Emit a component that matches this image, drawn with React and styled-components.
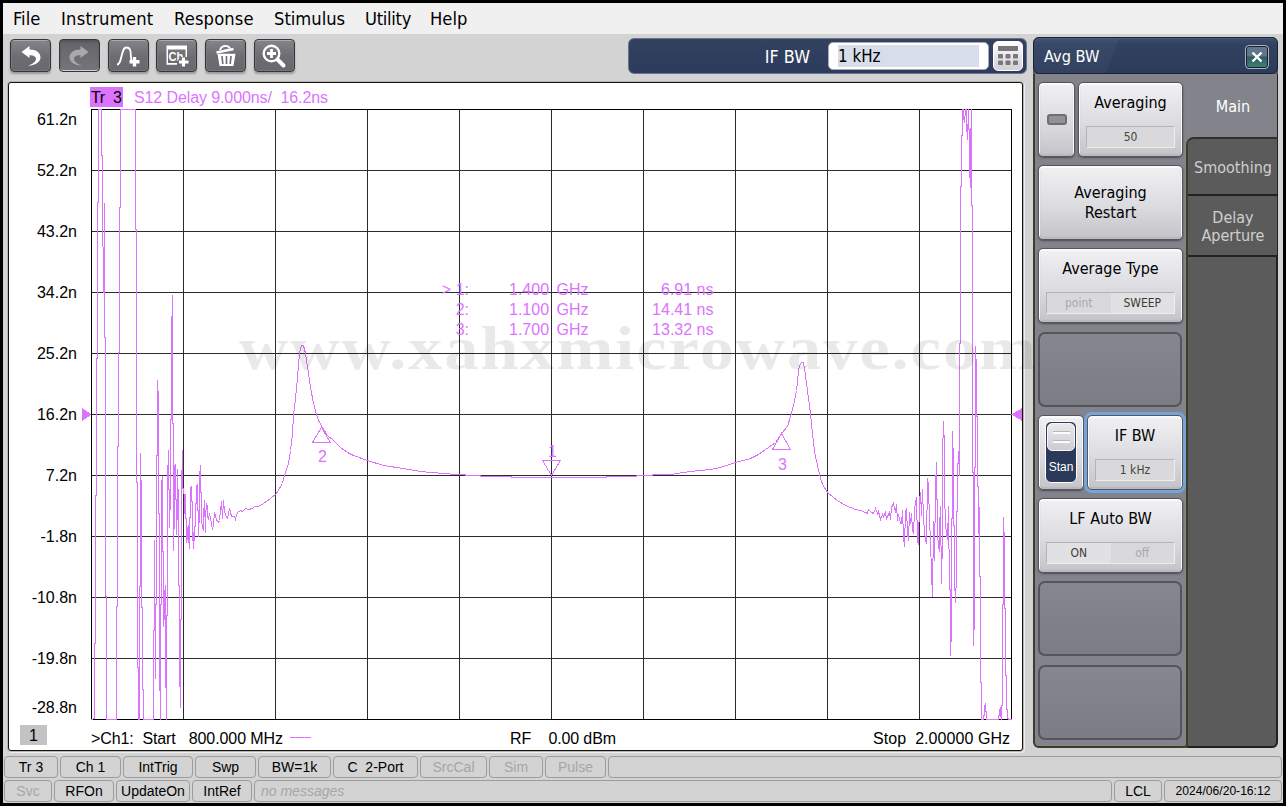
import React from 'react'
import styled, { createGlobalStyle, css } from 'styled-components'

const colors = {
    trace: '#dc73ff',
    window: '#d3d3d3',
    panel: '#83838c',
    tab: '#5b5b5b',
}

const uiFont = '"DejaVu Sans Condensed", "DejaVu Sans", sans-serif'
const plotFont = '"Liberation Sans", Arial, sans-serif'

const GlobalStyle = createGlobalStyle`
    * {
        box-sizing: border-box;
    }
    body {
        margin: 0;
        background: #000;
        font-family: ${uiFont};
    }
`

const Window = styled.div`
    width: 1286px;
    height: 806px;
    border: 3px solid #000;
    background: ${colors.window};
    display: flex;
    flex-direction: column;
    overflow: hidden;
`

const MenuBar = styled.nav`
    height: 31px;
    flex: none;
    background: #f0f0f0;
    display: flex;
    align-items: flex-start;
    padding-left: 10px;
    gap: 20px;
`

const MenuItem = styled.span`
    width: ${({ $width }) => $width}px;
    font-size: 18.2px;
    letter-spacing: ${({ $spacing }) => $spacing || 0}px;
    line-height: 31px;
    white-space: nowrap;
    color: #000;
`

const Workspace = styled.div`
    height: 719px;
    flex: none;
    display: flex;
`

const MainColumn = styled.div`
    width: 1030px;
    padding-left: 5px;
`

const Toolbar = styled.div`
    height: 48px;
    display: flex;
    align-items: flex-start;
    justify-content: space-between;
    padding: 4px 6px 0 2px;
`

const ToolGroup = styled.div`
    display: flex;
    gap: 7.8px;
    padding-top: 1px;
`

const ToolButton = styled.button`
    width: 41px;
    height: 33px;
    padding: 0;
    border: 1px solid #36363a;
    border-radius: 4px;
    background: linear-gradient(#858589, #6c6c71 55%, #68686d);
    box-shadow: inset 0 1px 0 #a9a9ad, inset 0 0 0 1px #77777c, 0 2px 2px #999;
    display: flex;
    align-items: center;
    justify-content: center;

    ${({ $pressed }) => $pressed && css`
        background: linear-gradient(#646468, #75757a);
        box-shadow: inset 0 2px 2px #55555a, inset 0 -1px 0 #d0d0d2;
    `}
`

const EntryBar = styled.div`
    width: 399px;
    height: 36px;
    border-radius: 6px;
    border: 1px solid #69748c;
    background: linear-gradient(#32425f, #2d3b5d);
    display: flex;
    align-items: center;
    justify-content: flex-end;
    padding-right: 3px;
`

const EntryLabel = styled.span`
    color: #fff;
    font-size: 17.8px;
    margin-right: 18px;
    padding-top: 1px;
`

const EntryField = styled.div`
    width: 161px;
    height: 28px;
    border-radius: 5px;
    border: 1px solid #a5abb7;
    background: #fff;
    padding: 2px 9px 3px;
    margin-top: -1px;
`

const EntryValue = styled.div`
    height: 22px;
    line-height: 22px;
    background: #d7dde9;
    font-size: 16.8px;
`

const KeypadButton = styled.button`
    width: 30px;
    height: 30px;
    margin-left: 4px;
    padding: 0;
    border: 1px solid #fff;
    border-radius: 5px;
    background: linear-gradient(#fff, #cfcfd4);
    display: flex;
    align-items: center;
    justify-content: center;
`

const Display = styled.div`
    position: relative;
    width: 1015px;
    height: 669px;
    border: 1px solid #14140a;
    border-radius: 3px;
    background: #fff;
    box-shadow: 0 0 0 1px #b6b6b0, 1px 1px 0 1px #eee;
`

const Plot = styled.svg`
    display: block;
    font-family: ${plotFont};
    font-size: 16px;

    text {
        white-space: pre;
    }
`

const Watermark = styled.div`
    position: absolute;
    left: 230px;
    top: 231px;
    font-family: "Liberation Serif", serif;
    font-weight: bold;
    font-size: 61px;
    line-height: 70px;
    letter-spacing: 1.75px;
    transform: scaleX(1.12);
    transform-origin: left;
    white-space: nowrap;
    color: rgba(0, 0, 0, 0.085);
`

const SidePanel = styled.aside`
    position: relative;
    width: 245px;
    height: 711px;
    margin-top: 3px;
    border-radius: 6px;
    background: ${colors.tab};
    display: flex;
    flex-direction: column;
`

const PanelTitle = styled.header`
    height: 37px;
    flex: none;
    border: 1px solid #1b2230;
    border-radius: 6px;
    background:
        linear-gradient(110deg, rgba(255, 255, 255, 0.035) 33%, transparent 33.4%),
        linear-gradient(#3b4c6e, #31415f 20%, #2d3b5b);
    box-shadow: inset 0 1px 0 #4b5c80;
    display: flex;
    align-items: center;
    justify-content: space-between;
    padding: 2px 8px 0 10px;
    color: #fff;
    font-size: 16.2px;
`

const CloseButton = styled.button`
    width: 24px;
    height: 24px;
    padding: 0;
    border: 1px solid #a9b3c4;
    border-radius: 4px;
    background: linear-gradient(#5f7788 45%, #2f5b5e 50%, #3f8377);
    box-shadow: inset 0 0 0 1px #17202c;
    display: flex;
    align-items: center;
    justify-content: center;
`

const PanelBody = styled.div`
    flex: 1;
    display: flex;
    border-radius: 0 0 6px 6px;
    overflow: hidden;
`

const KeyColumn = styled.div`
    width: 154px;
    border-left: 2px solid #3c3e28;
    border-right: 1px solid #3c3e28;
    border-bottom: 2px solid #3c3e28;
    border-radius: 0 0 4px 6px;
    background: ${colors.panel};
    display: flex;
    flex-direction: column;
    gap: 8.25px;
    padding: 7.8px 3px 0;
`

const KeyRow = styled.div`
    display: flex;
    gap: 3px;
    height: 75px;
    flex: none;
`

const raised = css`
    border: 1px solid #55555b;
    border-radius: 5px;
    background: linear-gradient(#f1f1f4, #dcdce0 55%, #c3c3c8);
    box-shadow: inset 0 1px 0 1px #fafafc, inset 0 -1px 1px 1px #b9b9be, 0 1px 2px #4d4d55;
`

const SoftKey = styled.button`
    ${raised}
    flex: 1;
    min-width: 0;
    height: 75px;
    font-family: inherit;
    font-size: 16px;
    line-height: 20px;
    color: #000;
    display: flex;
    flex-direction: column;
    align-items: center;
    justify-content: ${({ $centered }) => ($centered ? 'center' : 'space-between')};
    padding: ${({ $centered }) => ($centered ? '0 30px' : '10px 7px 8px 7px')};

    ${({ $active }) => $active && css`
        outline: 3px solid #73a4da;
        outline-offset: -0.5px;
    `}
`

const EmptyKey = styled.div`
    width: 144px;
    height: 75px;
    flex: none;
    border: 2px solid #54545c;
    border-radius: 7px;
    background: linear-gradient(#86868f, #7c7c85);
`

const ValueBox = styled.span`
    width: 100%;
    height: 22px;
    border: 1px solid #b4b4b8;
    border-right-color: #eee;
    border-bottom-color: #eee;
    background: #d9d9dc;
    font-size: 12px;
    line-height: 20px;
    text-align: center;
    color: #45453c;
    display: flex;
`

const Value = styled.span`
    flex: 1;
`

const ValueOption = styled(Value)`
    color: ${({ $on }) => ($on ? '#3c3c34' : '#a8a8ab')};
    background: ${({ $on }) => ($on ? '#e1e1e4' : 'transparent')};
`

const LampKey = styled.button`
    ${raised}
    width: 37px;
    height: 75px;
    padding: 0;
    display: flex;
    align-items: center;
    justify-content: center;
`

const Lamp = styled.span`
    width: 20px;
    height: 11px;
    border: 2px solid #6e6e72;
    border-radius: 3px;
    background: #929296;
`

const SwitchKey = styled.button`
    ${raised}
    width: 46px;
    height: 75px;
    padding: 0;
    display: flex;
    align-items: center;
    justify-content: center;
`

const SwitchTrack = styled.span`
    width: 32px;
    height: 62px;
    border: 1px solid #fff;
    border-radius: 6px;
    background: #2c3a59;
    color: #fff;
    font-size: 12px;
    display: flex;
    flex-direction: column;
    align-items: center;
    padding-top: 1px;
    gap: 9px;
`

const SwitchKnob = styled.span`
    width: 28px;
    height: 28px;
    flex: none;
    border: 1px solid #f8f8f8;
    border-radius: 5px;
    background: linear-gradient(#e9e9ec, #cdcdd1);
    display: flex;
    flex-direction: column;
    align-items: center;
    justify-content: center;
    gap: 6px;
`

const KnobGrip = styled.span`
    width: 17px;
    height: 3px;
    border-top: 1px solid #b8b8bc;
    background: #fafafa;
`

const TabColumn = styled.div`
    flex: 1;
    margin-left: -1px;
    background: ${colors.panel};
    display: flex;
    flex-direction: column;
`

const Tab = styled.div`
    height: ${({ $height }) => $height}px;
    flex: none;
    font-size: 16px;
    line-height: 18px;
    text-align: center;
    padding: ${({ $active }) => ($active ? '2px 0 0 3px' : '2px 0 0 1px')};
    color: ${({ $active }) => ($active ? '#fff' : '#cfcfcf')};
    background: ${({ $active }) => ($active ? 'transparent' : colors.tab)};
    border-bottom: ${({ $active }) => ($active ? '0' : '2px solid #222')};
    border-right: 1px solid #222;
    border-top-left-radius: ${({ $first }) => ($first ? 6 : 0)}px;
    display: flex;
    align-items: center;
    justify-content: center;
`

const TabStack = styled.div`
    flex: 1;
    border-top: 2px solid #2f3122;
    border-left: 2px solid #3c3e28;
    border-top-left-radius: 8px;
    background: ${colors.tab};
    display: flex;
    flex-direction: column;
`

const TabFill = styled.div`
    flex: 1;
    border-right: 2px solid #222;
    border-bottom: 2px solid #222;
    border-bottom-right-radius: 6px;
`

const StatusArea = styled.footer`
    display: flex;
    flex-direction: column;
    gap: 2px;
    padding: 3px 1px 0;
`

const StatusRow = styled.div`
    display: flex;
    gap: 2px;
`

const StatusCell = styled.div`
    width: ${({ $width }) => ($width ? `${$width}px` : 'auto')};
    flex: ${({ $width }) => ($width ? 'none' : '1')};
    height: 22px;
    border: 1px solid #9c9c9c;
    border-radius: 4px;
    font-family: ${plotFont};
    font-size: ${({ $small }) => ($small ? 12.1 : 14)}px;
    font-style: ${({ $message }) => ($message ? 'italic' : 'normal')};
    line-height: 20px;
    text-align: ${({ $message }) => ($message ? 'left' : 'center')};
    padding-left: ${({ $message }) => ($message ? 6 : 0)}px;
    white-space: pre;
    color: ${({ $dim }) => ($dim ? '#a6a6a6' : '#000')};
`

const verticals = [183, 275, 367, 459, 551, 643, 735, 827, 919]
const horizontals = [170, 231, 292, 353, 414, 475, 536, 597, 658]

const scaleLabels = [
    ['61.2n', 119], ['52.2n', 170], ['43.2n', 231], ['34.2n', 292],
    ['25.2n', 353], ['16.2n', 414], ['7.2n', 475], ['-1.8n', 536],
    ['-10.8n', 597], ['-19.8n', 658], ['-28.8n', 707],
]

const markerRows = [
    { name: '> 1:', freq: '1.400', value: '6.91 ns', y: 295 },
    { name: '2:', freq: '1.100', value: '14.41 ns', y: 315 },
    { name: '3:', freq: '1.700', value: '13.32 ns', y: 335 },
]

// x,y pairs of the group delay trace, clipped to the plot area
const lowBand = `91,719 94,718 94,643 95,643 95,495 96,495 96,358 97,358 97,202 98,202 98,109
101,109 101,155 102,155 102,246 103,247 103,292 104,292 104,202 104,337 105,337 105,596 106,596 106,719
116,719 116,606 117,606 117,446 118,446 118,352 119,352 119,207 120,207 120,109
135,109 135,229 136,229 136,482 137,482 137,667 138,667 138,719 139,719 139,586 140,586 140,453
141,505 141,607 142,607 142,689 143,689 143,719 153,719 153,630 154,630 154,540
155,678 155,604 156,604 156,455 157,455 157,380 158,401 158,513 159,513 159,661 160,719 160,604
161,604 161,483 162,476 162,551 163,551 163,626 164,614 164,595 165,585 165,653 166,719 166,615
167,615 167,480 168,450 168,489 169,489 169,527 170,493 170,419 171,419 171,337 172,295 172,423
173,423 173,550 174,508 174,466 175,464 175,499 176,499 176,534 177,506 177,469 178,507 178,585
179,585 179,666 180,707 180,619 181,619 181,491 182,450 182,488 183,488 184,498 184,513 185,494 185,518
186,518 186,542 187,537 187,529 188,525 188,537 189,548 189,517 190,517 190,487 191,486 191,501
192,501 192,532 193,548 193,532 194,540 194,526 195,526 195,503 196,503 196,486 197,484 197,510
198,510 198,536 199,510 199,476 200,465 200,492 201,492 201,520 202,527 203,530 203,515 204,500
205,532 205,516 206,503 207,507 207,515 208,519 209,513 210,517 211,524 212,529 213,524 214,512
215,516 216,519 217,521 218,522 219,520 220,510 221,501 222,518 223,500 224,510 225,515 227,518
228,513 229,508 230,512 231,516 234,516 235,519 236,515 237,512 240,510 242,511 245,508 248,509
252,508 254,506`

const midBand = `254,506 258,506 263,503 270,498 276,493 282,483 284,475 288,463 290,450 292,433 293,415
295,398 297,377 299,352 301,345 303,345 305,353 308,373 310,387 313,403 316,414 318,420 322,427 327,435
333,440 340,447 347,452 353,455 367,460 383,465 403,468 420,471 443,473 455,474 465,474 465,475 480,475
480,476 511,476 511,477 606,477 606,476 636,476 636,475 652,475 652,474 670,474 690,471 710,469 720,467
735,462 750,458 758,454 768,447 775,442 781,433 787,426 790,416 793,405 796,390 798,371 799,365 801,362
803,362 804,368 806,383 808,398 810,413 812,433 814,451 817,465 820,478 823,486 828,493 837,500 845,505
855,509 860,510 865,512`

const highBand = `865,512 867,513 868,509 871,512 873,513 875,508 877,513 878,511 880,519 882,514 883,516
885,512 886,518 889,512 890,519 891,507 893,503 895,512 896,504 897,520 898,514 900,523 901,523 902,510
903,536 904,546 905,511 906,508 907,532 908,540 909,512 910,523 911,513 912,529 913,533 914,510 915,502
916,497 917,541 918,544 919,500 920,492 921,515 922,489 923,517 924,531 925,540 926,543 927,478
928,485 929,520 930,540 931,573 932,596 933,521 934,560 935,487 936,462 937,534 938,545 939,551
939,528 940,506 941,583 942,536 942,456 943,421 944,447 944,494 945,523 946,533 947,539 948,506
949,589 950,589 950,655 951,629 951,518 952,518 952,431 953,463 953,525 954,525 954,579 955,602
956,574 956,511 957,511 957,463 958,463 958,451 959,475 959,343 960,343 960,186 961,186 961,135
962,135 962,109 963,109 963,116 964,122 965,109 966,109 966,124 967,139 968,109 968,129 969,129 969,167
970,187 970,148 971,109 971,205 972,205 972,472 973,472 973,645 974,616 974,467 975,467 975,346
976,370 976,416 977,416 977,486 978,486 978,533 979,507 979,576 980,576 980,682 981,682 981,719
983,719 983,715 984,715 984,707 985,703 985,710 986,712 986,719 998,719 998,715 999,715 999,710
1000,707 1000,714 1001,719 1001,705 1002,705 1002,604 1003,604 1003,517 1004,545 1004,608 1005,608
1005,675 1006,675 1006,709 1007,709 1007,717 1008,719 1011,719`

const UndoIcon = ({ flipped, color = '#fff' }) => (
    <svg width="24" height="24" viewBox="0 0 24 24">
        <g transform={flipped ? 'translate(24 0) scale(-1 1)' : undefined}>
            <path d="M10.500 2 L10.500 5.500 C17.500 5.500 21.500 9 21.500 13.500 C21.500 18 16 21.500 9 21.800 C14 20 17 17.500 17 14.800 C17 12.200 14 11 10.500 11.200 L10.500 14 L2.500 8 Z" fill={color} />
        </g>
    </svg>
)

const AddTraceIcon = () => (
    <svg width="26" height="24" viewBox="0 0 26 24" fill="none" stroke="#fff">
        <path d="M2 20.500 C7.500 20.500 5.500 3.500 11.500 3.500 C17.500 3.500 15 12 16.500 17" strokeWidth="1.800" />
        <path d="M19.500 13 v9.500 M14.500 17.800 h10" strokeWidth="3.400" />
    </svg>
)

const AddChannelIcon = () => (
    <svg width="26" height="24" viewBox="0 0 26 24">
        <path d="M2.500 1.500 h20.500 v11.500 h-1.500 v-7.500 h-17.500 v13.500 h9 v1.800 h-10.500 z" fill="#fff" />
        <text x="4.500" y="16.500" fill="#fff" fontFamily="Liberation Sans" fontWeight="bold" fontSize="13" textLength="15" lengthAdjust="spacingAndGlyphs">Ch</text>
        <path d="M19.500 13 v10.500 M14 18 h11" stroke="#6d6d72" strokeWidth="5" />
        <path d="M19.500 13.500 v9 M15 18 h9.500" stroke="#fff" strokeWidth="3.200" />
    </svg>
)

const TrashIcon = () => (
    <svg width="24" height="24" viewBox="0 0 24 24" fill="none" stroke="#fff">
        <path d="M2.500 8.500 L19.500 5" strokeWidth="2.400" />
        <path d="M6 6 C7.500 1 14 .8 16 4.500" strokeWidth="1.800" />
        <path d="M3.500 9.800 H21.500 L19.500 22 H5.500 Z" fill="#fff" stroke="none" />
        <path d="M8 12 l.8 8 M12.500 12 v8 M17 12 l-.8 8" stroke="#6b6b70" strokeWidth="1.600" />
    </svg>
)

const ZoomIcon = () => (
    <svg width="26" height="26" viewBox="0 0 26 26" fill="none" stroke="#fff">
        <circle cx="10.500" cy="10.500" r="7.800" strokeWidth="2.400" />
        <path d="M10.500 6 v9 M6 10.500 h9" strokeWidth="2.800" />
        <path d="M16.500 16.500 L22.500 22.500" strokeWidth="4" strokeLinecap="round" />
    </svg>
)

const KeypadIcon = () => (
    <svg width="20" height="20" viewBox="0 0 20 20" fill="#77777b">
        <rect x="0" y="0" width="20" height="5" />
        {[8, 14.5].map((y) => [0, 7.5, 15].map((x) => (
            <rect key={`${x}-${y}`} x={x} y={y} width="5" height="4.500" rx="1" />
        )))}
    </svg>
)

const CloseIcon = () => (
    <svg width="12" height="12" viewBox="0 0 12 12">
        <path d="M1.500 1.500 L10.500 10.500 M10.500 1.500 L1.500 10.500" stroke="#fff" strokeWidth="2.400" />
    </svg>
)

const DelayPlot = () => (
    <Plot width="1013" height="667" viewBox="9 83 1013 667">
        <g shapeRendering="crispEdges" transform="translate(.5 .5)" fill="none">
            {verticals.map((x) => <path key={x} d={`M${x} 109V719`} stroke="#2b2b2b" />)}
            {horizontals.map((y) => <path key={y} d={`M91 ${y}H1011`} stroke="#2b2b2b" />)}
            <rect x="91" y="109" width="920" height="610" stroke="#000" />
            <g stroke={colors.trace}>
                <polyline points={lowBand} />
                <polyline points={midBand} />
                <polyline points={highBand} />
                <path d="M321 427L312 442H330Z" />
                <path d="M781 433L772 449H790Z" />
                <path d="M551 475L542 460H560Z" />
                <path d="M289 737H310" />
            </g>
            <path d="M81.500 407.500V420.500L91 414Z M1021.500 407.500V420.500L1011 414Z" fill={colors.trace} />
        </g>

        <rect x="90" y="87" width="33" height="20" fill={colors.trace} />
        <text x="91" y="103" textLength="31">{'Tr  3'}</text>
        <text x="134" y="103" fill={colors.trace} textLength="194">{'S12 Delay 9.000ns/  16.2ns'}</text>

        {scaleLabels.map(([label, y]) => (
            <text key={label} x="77" y={y + 6} textAnchor="end">{label}</text>
        ))}

        <g fill={colors.trace}>
            {markerRows.map(({ name, freq, value, y }) => (
                <React.Fragment key={name}>
                    <text x="469" y={y} textAnchor="end">{name}</text>
                    <text x="509" y={y}>{freq}</text>
                    <text x="556.500" y={y}>GHz</text>
                    <text x="713.500" y={y} textAnchor="end">{value}</text>
                </React.Fragment>
            ))}
            <text x="318" y="462">2</text>
            <text x="778" y="470">3</text>
            <text x="548" y="457">1</text>
        </g>

        <rect x="20" y="725" width="27" height="20" fill="#c3c3c3" />
        <text x="29" y="741">1</text>
        <text x="91" y="744" textLength="192">{'>Ch1:  Start   800.000 MHz'}</text>
        <text x="510" y="744" textLength="106">{'RF    0.00 dBm'}</text>
        <text x="873" y="744" textLength="137">{'Stop  2.00000 GHz'}</text>
    </Plot>
)

const App = () => (
    <Window>
        <GlobalStyle />
        <MenuBar>
            <MenuItem $width={28}>File</MenuItem>
            <MenuItem $width={93} $spacing={0.25}>Instrument</MenuItem>
            <MenuItem $width={80} $spacing={0.15}>Response</MenuItem>
            <MenuItem $width={71}>Stimulus</MenuItem>
            <MenuItem $width={45} $spacing={-0.3}>Utility</MenuItem>
            <MenuItem $width={38}>Help</MenuItem>
        </MenuBar>

        <Workspace>
            <MainColumn>
                <Toolbar>
                    <ToolGroup>
                        <ToolButton><UndoIcon /></ToolButton>
                        <ToolButton $pressed><UndoIcon flipped color="#a9a9ac" /></ToolButton>
                        <ToolButton><AddTraceIcon /></ToolButton>
                        <ToolButton><AddChannelIcon /></ToolButton>
                        <ToolButton><TrashIcon /></ToolButton>
                        <ToolButton><ZoomIcon /></ToolButton>
                    </ToolGroup>
                    <EntryBar>
                        <EntryLabel>IF BW</EntryLabel>
                        <EntryField><EntryValue>1 kHz</EntryValue></EntryField>
                        <KeypadButton><KeypadIcon /></KeypadButton>
                    </EntryBar>
                </Toolbar>
                <Display>
                    <DelayPlot />
                    <Watermark>www.xahxmicrowave.com</Watermark>
                </Display>
            </MainColumn>

            <SidePanel>
                <PanelTitle>
                    Avg BW
                    <CloseButton><CloseIcon /></CloseButton>
                </PanelTitle>
                <PanelBody>
                    <KeyColumn>
                        <KeyRow>
                            <LampKey><Lamp /></LampKey>
                            <SoftKey>
                                Averaging
                                <ValueBox><Value>50</Value></ValueBox>
                            </SoftKey>
                        </KeyRow>
                        <KeyRow>
                            <SoftKey $centered>Averaging Restart</SoftKey>
                        </KeyRow>
                        <KeyRow>
                            <SoftKey>
                                Average Type
                                <ValueBox>
                                    <ValueOption>point</ValueOption>
                                    <ValueOption $on>SWEEP</ValueOption>
                                </ValueBox>
                            </SoftKey>
                        </KeyRow>
                        <EmptyKey />
                        <KeyRow>
                            <SwitchKey>
                                <SwitchTrack>
                                    <SwitchKnob><KnobGrip /><KnobGrip /></SwitchKnob>
                                    Stan
                                </SwitchTrack>
                            </SwitchKey>
                            <SoftKey $active>
                                IF BW
                                <ValueBox><Value>1 kHz</Value></ValueBox>
                            </SoftKey>
                        </KeyRow>
                        <KeyRow>
                            <SoftKey>
                                LF Auto BW
                                <ValueBox>
                                    <ValueOption $on>ON</ValueOption>
                                    <ValueOption>off</ValueOption>
                                </ValueBox>
                            </SoftKey>
                        </KeyRow>
                        <EmptyKey />
                        <EmptyKey />
                    </KeyColumn>
                    <TabColumn>
                        <Tab $active $height={63}>Main</Tab>
                        <TabStack>
                            <Tab $first $height={57}>Smoothing</Tab>
                            <Tab $height={61}>Delay<br />Aperture</Tab>
                            <TabFill />
                        </TabStack>
                    </TabColumn>
                </PanelBody>
            </SidePanel>
        </Workspace>

        <StatusArea>
            <StatusRow>
                <StatusCell $width={54}>Tr 3</StatusCell>
                <StatusCell $width={61}>Ch 1</StatusCell>
                <StatusCell $width={70}>IntTrig</StatusCell>
                <StatusCell $width={61}>Swp</StatusCell>
                <StatusCell $width={73}>BW=1k</StatusCell>
                <StatusCell $width={85}>{'C  2-Port'}</StatusCell>
                <StatusCell $width={67} $dim>SrcCal</StatusCell>
                <StatusCell $width={54} $dim>Sim</StatusCell>
                <StatusCell $width={61} $dim>Pulse</StatusCell>
                <StatusCell />
            </StatusRow>
            <StatusRow>
                <StatusCell $width={48} $dim>Svc</StatusCell>
                <StatusCell $width={60}>RFOn</StatusCell>
                <StatusCell $width={74}>UpdateOn</StatusCell>
                <StatusCell $width={60}>IntRef</StatusCell>
                <StatusCell $message $dim>no messages</StatusCell>
                <StatusCell $width={48}>LCL</StatusCell>
                <StatusCell $width={118} $small>2024/06/20-16:12</StatusCell>
            </StatusRow>
        </StatusArea>
    </Window>
)

export default App
